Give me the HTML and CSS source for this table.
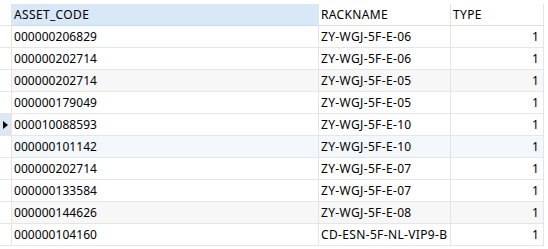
FILE: index.html
```html
<!DOCTYPE html>
<html>
<head>
<meta charset="utf-8">
<link rel="stylesheet" href="styles.css">
</head>
<body>
<div class="grid">
  <div class="cell gut"></div>
  <div class="cell head sorted txt">ASSET_CODE</div>
  <div class="cell head txt">RACKNAME</div>
  <div class="cell head txt">TYPE</div>

  <div class="cell gut"></div>
  <div class="cell">000000206829</div>
  <div class="cell txt">ZY-WGJ-5F-E-06</div>
  <div class="cell num">1</div>

  <div class="cell gut"></div>
  <div class="cell">000000202714</div>
  <div class="cell txt">ZY-WGJ-5F-E-06</div>
  <div class="cell num">1</div>

  <div class="cell gut"></div>
  <div class="cell gray">000000202714</div>
  <div class="cell gray txt">ZY-WGJ-5F-E-05</div>
  <div class="cell gray num">1</div>

  <div class="cell gut"></div>
  <div class="cell">000000179049</div>
  <div class="cell txt">ZY-WGJ-5F-E-05</div>
  <div class="cell num">1</div>

  <div class="cell gut current"><span class="arrow"></span></div>
  <div class="cell">000010088593</div>
  <div class="cell txt">ZY-WGJ-5F-E-10</div>
  <div class="cell num">1</div>

  <div class="cell gut"></div>
  <div class="cell blue">000000101142</div>
  <div class="cell blue txt">ZY-WGJ-5F-E-10</div>
  <div class="cell blue num">1</div>

  <div class="cell gut"></div>
  <div class="cell">000000202714</div>
  <div class="cell txt">ZY-WGJ-5F-E-07</div>
  <div class="cell num">1</div>

  <div class="cell gut"></div>
  <div class="cell">000000133584</div>
  <div class="cell txt">ZY-WGJ-5F-E-07</div>
  <div class="cell num">1</div>

  <div class="cell gut"></div>
  <div class="cell gray">000000144626</div>
  <div class="cell gray txt">ZY-WGJ-5F-E-08</div>
  <div class="cell gray num">1</div>

  <div class="cell gut"></div>
  <div class="cell">000000104160</div>
  <div class="cell txt">CD-ESN-5F-NL-VIP9-B</div>
  <div class="cell num">1</div>
</div>
</body>
</html>
```

FILE: styles.css
```css
html, body {
  margin: 0;
  padding: 0;
  background: #ffffff;
}
body {
  padding-top: 4px;
  font-family: "Noto Sans", "Open Sans", sans-serif;
  font-size: 12px;
  color: #000000;
}
.grid {
  display: grid;
  grid-template-columns: 12px 307px 132px 93px;
  grid-auto-rows: 22px;
  width: 544px;
}
.cell {
  box-sizing: border-box;
  border-right: 1px solid #e4e4e4;
  border-bottom: 1px solid #e6e6e6;
  padding: 0 3px 0 2px;
  display: flex;
  align-items: center;
  white-space: nowrap;
  overflow: hidden;
  line-height: 1;
  letter-spacing: 0.05px;
}
.txt {
  letter-spacing: 0.35px;
}
.head {
  border-bottom-color: #dcdcdc;
}
.sorted {
  background: #d9e8f7;
  border-bottom-color: #c9d9ea;
}
.gut {
  padding: 0;
}
.current {
  background: #dce7f3;
}
.arrow {
  width: 0;
  height: 0;
  margin-left: 3px;
  border-left: 5px solid #000;
  border-top: 4.5px solid transparent;
  border-bottom: 4.5px solid transparent;
}
.num {
  justify-content: flex-end;
  padding-right: 4px;
}
.gray {
  background: #f7f7f7;
}
.blue {
  background: #f3f8fd;
}
```
